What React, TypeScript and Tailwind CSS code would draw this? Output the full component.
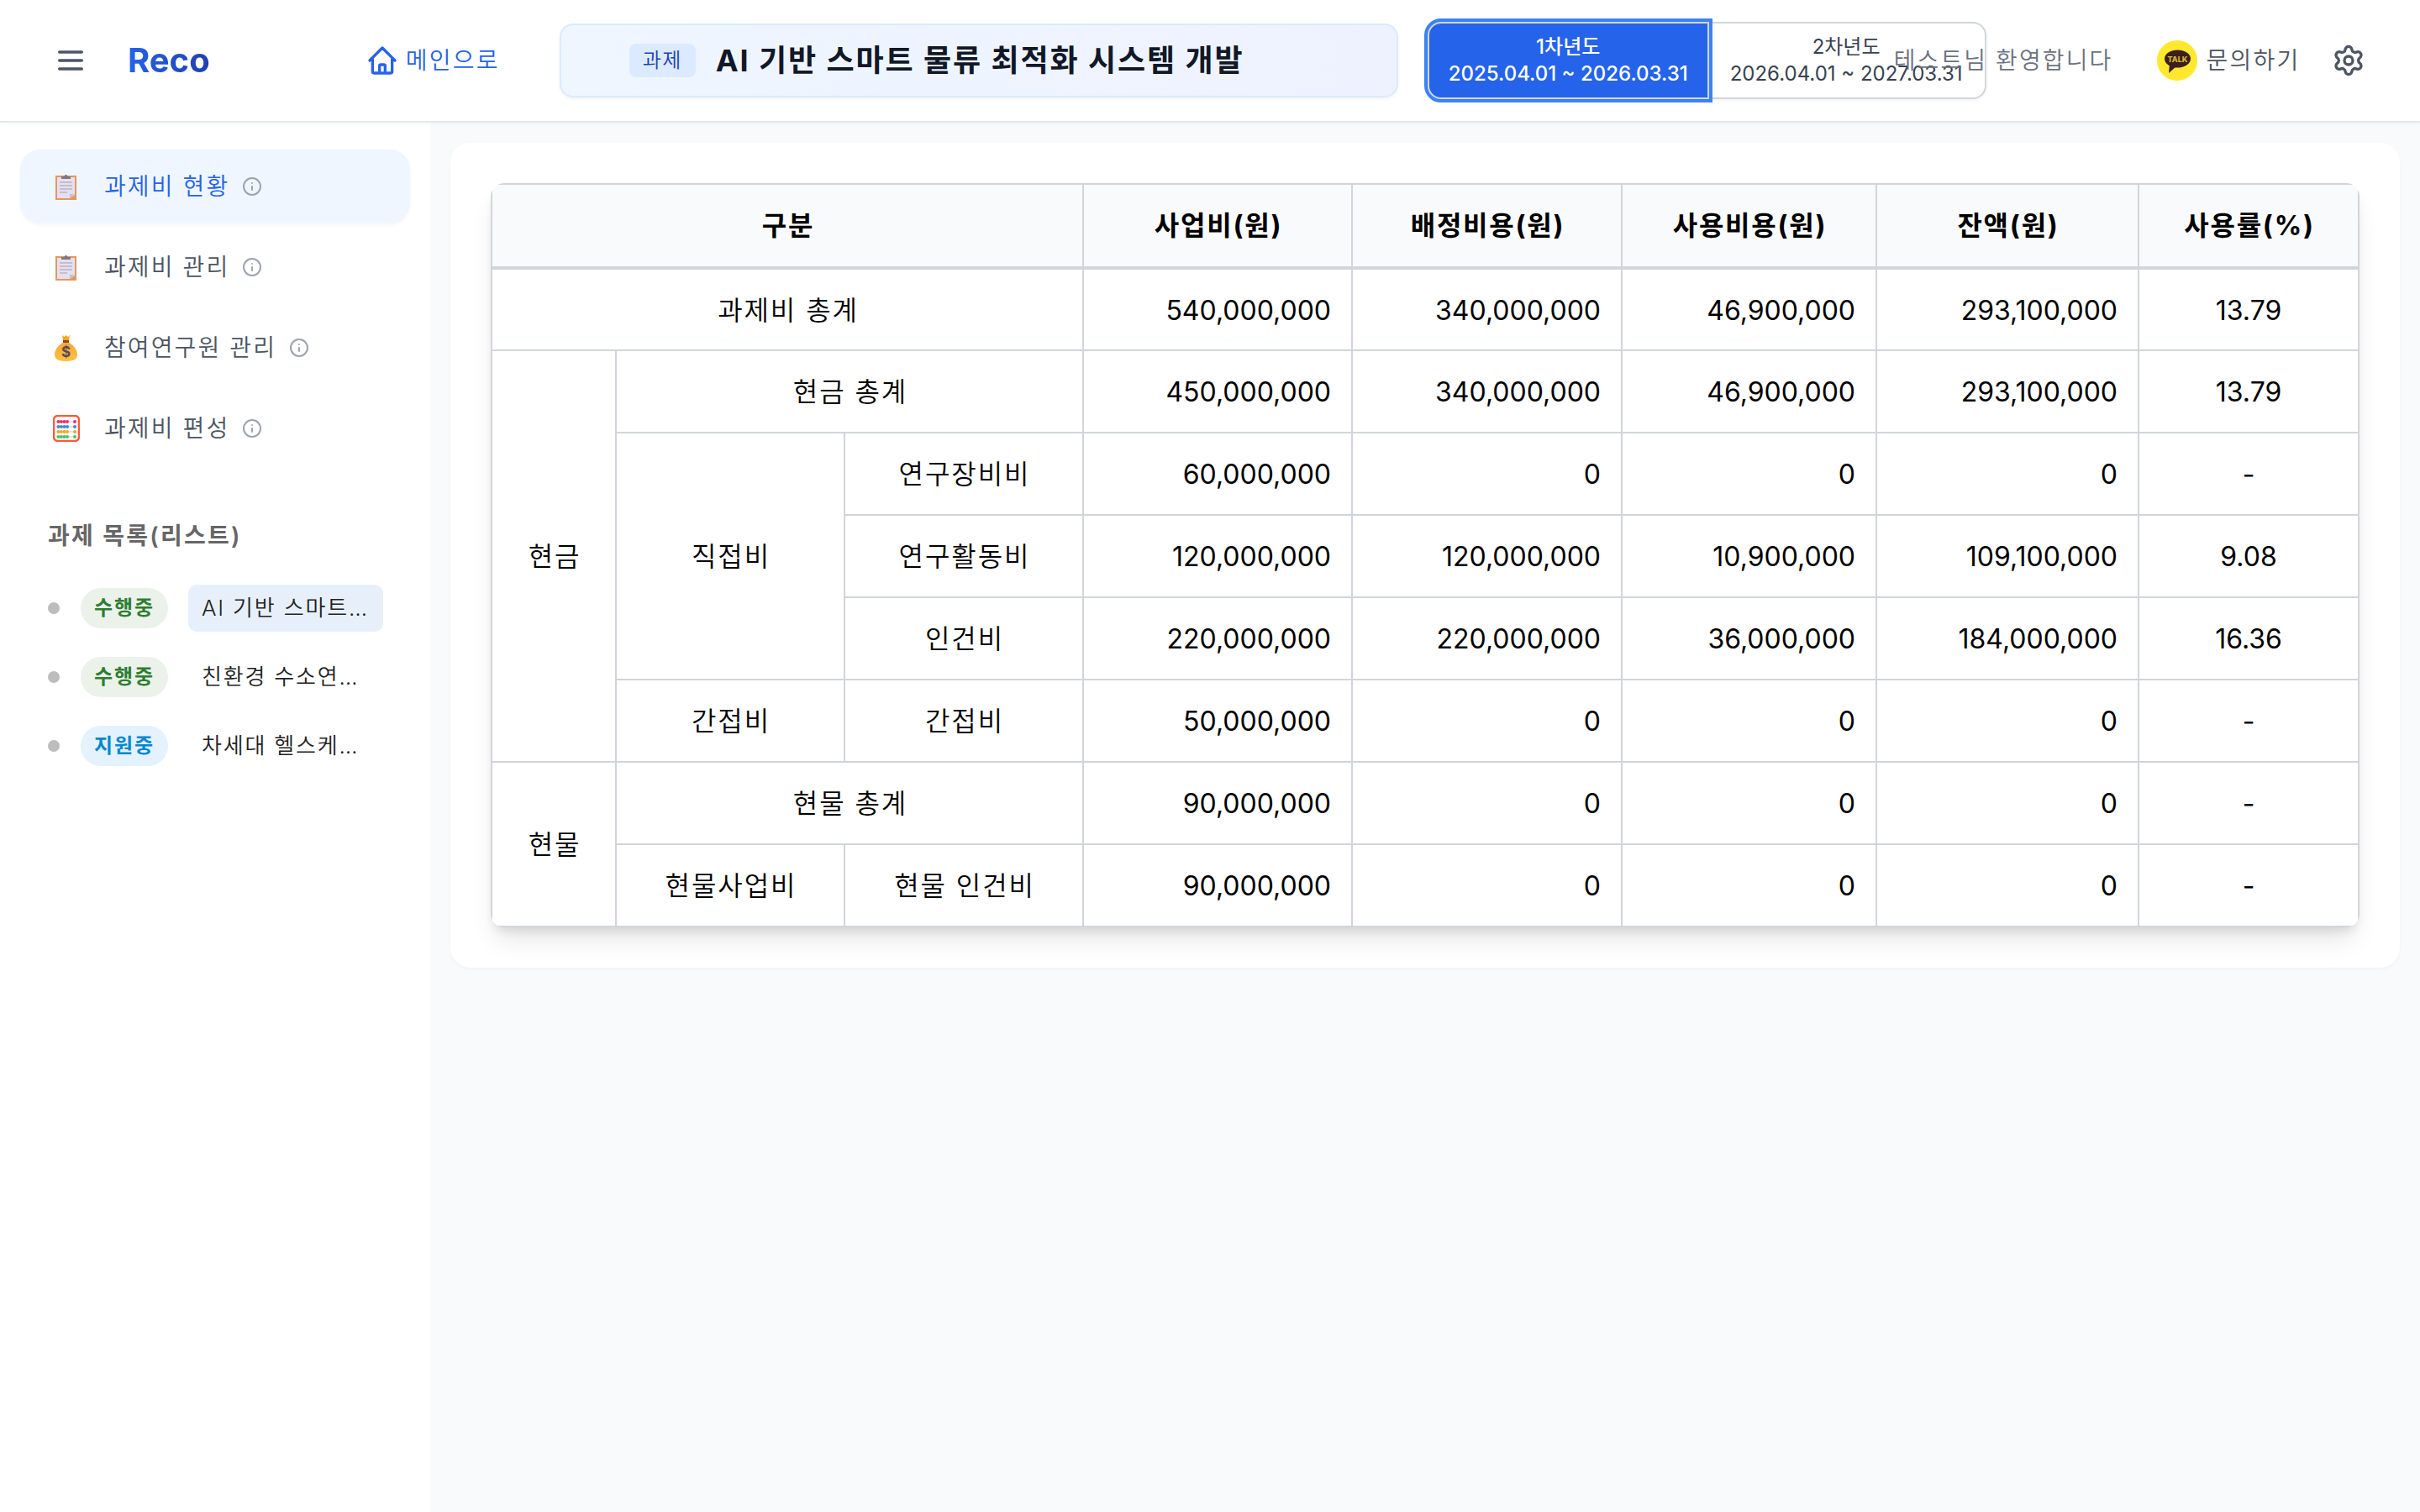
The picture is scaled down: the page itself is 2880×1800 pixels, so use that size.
import React from 'react';
import { Info, Settings } from 'lucide-react';

const FONT = "font-['Inter','Noto_Sans_CJK_KR',sans-serif]";

const ClipboardIcon = () => (
  <svg width="25" height="31" viewBox="0 0 25 31">
    <rect x="0" y="2" width="25" height="29" fill="#e0995f" />
    <path d="M2 4h21v21l-6 4H2z" fill="#e6dff0" />
    <path d="M17 29l6-5h-6z" fill="#c9bfd2" />
    <path d="M7 6V3h3.5a2 2 0 0 1 4 0H18v3z" fill="#7f7686" />
    <path d="M5 10h15M5 14h15M5 18h15M5 22h9" stroke="#a79bb0" strokeWidth="1" />
  </svg>
);

const MoneyBagIcon = () => (
  <svg width="27" height="31" viewBox="0 0 27 31">
    <defs>
      <linearGradient id="bag" x1="0" y1="0" x2="0" y2="1">
        <stop offset="0" stopColor="#f6a83a" />
        <stop offset="1" stopColor="#f9c13f" />
      </linearGradient>
    </defs>
    <path d="M9 0l2.5 2L13.500 0 16 2 18 0l-1 6.500h-7z" fill="#f5a524" />
    <rect x="10" y="6" width="7" height="3" fill="#8a4b1c" />
    <path d="M10 9h7c5 2.500 10 8 10 14 0 6-5 8-13.500 8S0 29 0 23C0 17 5 11.500 10 9z" fill="url(#bag)" />
    <text x="13.500" y="26" textAnchor="middle" fontSize="17" fontWeight="700" fill="#5b4a55" fontFamily="Inter">$</text>
  </svg>
);

const AbacusIcon = () => {
  const rows = [
    { y: 8, color: '#e8336f' },
    { y: 14, color: '#3f8ad8' },
    { y: 20, color: '#f5a623' },
    { y: 26, color: '#4bc46a' },
  ];
  return (
    <svg width="32" height="32" viewBox="0 0 32 32">
      <rect x="1" y="1" width="30" height="30" rx="5" fill="#fff" stroke="#fb5a3c" strokeWidth="2.500" />
      {rows.map((r) => (
        <g key={r.y}>
          <path d={`M4 ${r.y}h24`} stroke="#c9c3cc" strokeWidth="1" />
          {[6.500, 10, 13.500, 17, 26].map((x) => (
            <circle key={x} cx={x} cy={r.y} r="2" fill={r.color} />
          ))}
        </g>
      ))}
    </svg>
  );
};

const KakaoIcon = () => (
  <svg width="48" height="48" viewBox="0 0 48 48">
    <circle cx="24" cy="24" r="24" fill="#ffe82e" />
    <ellipse cx="24.500" cy="22" rx="15.500" ry="10.500" fill="#3c1e1e" />
    <path d="M15 28l-1 11 9-8z" fill="#3c1e1e" />
    <text x="24.500" y="25.500" textAnchor="middle" fontSize="9" fontWeight="800" fill="#d8b92e" fontFamily="Inter">TALK</text>
  </svg>
);

const navItems = [
  { label: '과제비 현황', icon: <ClipboardIcon />, active: true },
  { label: '과제비 관리', icon: <ClipboardIcon />, active: false },
  { label: '참여연구원 관리', icon: <MoneyBagIcon />, active: false },
  { label: '과제비 편성', icon: <AbacusIcon />, active: false },
];

const projects = [
  { status: '수행중', tone: 'green', title: 'AI 기반 스마트 물류 최적화 시스템 개발', selected: true },
  { status: '수행중', tone: 'green', title: '친환경 수소연료전지 핵심 기술 개발', selected: false },
  { status: '지원중', tone: 'blue', title: '차세대 헬스케어 데이터 플랫폼 구축', selected: false },
];

const Sidebar = () => (
  <aside className="w-[512px] shrink-0 bg-white pt-[32px] px-[24px]">
    <nav className="flex flex-col gap-[8px]">
      {navItems.map((item) => (
        <div
          key={item.label}
          className={`flex items-center h-[88px] pl-[38px] rounded-[24px] text-[28px] ${
            item.active ? 'bg-[#eff6ff] text-[#2563eb] shadow-[0_2px_4px_rgba(0,0,0,0.04)]' : 'text-[#4b5563]'
          }`}
        >
          <span className="w-[33px] flex justify-center">{item.icon}</span>
          <span className="ml-[29px] tracking-[0.075em] font-[350]">{item.label}</span>
          <Info size={24} className="ml-[15px] text-[#9ca3af]" />
        </div>
      ))}
    </nav>
    <h2 className="mt-[63px] ml-[33px] text-[28px] leading-[42px] font-semibold text-[#666666] tracking-[0.08em]">
      과제 목록(리스트)
    </h2>
    <ul className="mt-[37px] ml-[33px] flex flex-col gap-[26px]">
      {projects.map((p) => (
        <li key={p.title} className="flex items-center h-[56px]">
          <span className="w-[14px] h-[14px] rounded-full bg-[#bdbdbd]" />
          <span
            className={`ml-[25px] w-[104px] h-[48px] rounded-full flex items-center justify-center text-[24px] font-bold tracking-[0.08em] ${
              p.tone === 'green' ? 'bg-[#ebf2ea] text-[#2e7d32]' : 'bg-[#e3f2fd] text-[#0288d1]'
            }`}
          >
            {p.status}
          </span>
          <span
            className={`ml-[24px] w-[232px] h-[56px] pl-[16px] pr-[16px] rounded-[10px] leading-[56px] text-[26px] font-[350] text-[#222222] truncate tracking-[0.07em] ${
              p.selected ? 'bg-[#e7f0fa]' : ''
            }`}
          >
            {p.title}
          </span>
        </li>
      ))}
    </ul>
  </aside>
);

const Header = () => (
  <header className="relative z-10 h-[146px] shrink-0 flex items-center pl-[64px] bg-white border-b-2 border-[#e5e7eb] shadow-[0_2px_4px_rgba(0,0,0,0.03)]">
    <svg width="40" height="40" viewBox="0 0 24 24" fill="none" stroke="#4b5563" strokeWidth="2" strokeLinecap="round">
      <path d="M4 6h16M4 12h16M4 18h16" />
    </svg>
    <span className="ml-[48px] text-[40px] font-bold text-transparent bg-clip-text bg-gradient-to-r from-[#2563eb] to-[#1e40af]">Reco</span>
    <div className="ml-[185px] flex items-center text-[#2563eb]">
      <svg width="40" height="40" viewBox="0 0 24 24" fill="none" stroke="currentColor" strokeWidth="2" strokeLinecap="round" strokeLinejoin="round">
        <path d="M3 12l2-2m0 0l7-7 7 7M5 10v10a1 1 0 001 1h3m10-11l2 2m-2-2v10a1 1 0 01-1 1h-3m-6 0a1 1 0 001-1v-4a1 1 0 011-1h2a1 1 0 011 1v4a1 1 0 001 1m-6 0h6" />
      </svg>
      <span className="ml-[8px] text-[28px] tracking-[0.08em] font-[350]">메인으로</span>
    </div>
    <div className="ml-[71px] w-[998px] h-[88px] shrink-0 flex items-center pl-[81px] rounded-[16px] border-2 border-[#dbeafe] bg-gradient-to-r from-[#eff6ff] to-[#eef2ff] shadow-[0_2px_4px_rgba(0,0,0,0.05)]">
      <span className="w-[79px] h-[40px] rounded-[8px] bg-[#dbeafe] text-[#1e40af] text-[24px] font-[350] flex items-center justify-center tracking-[0.06em]">과제</span>
      <span className="ml-[24px] text-[36px] font-bold text-[#111827] tracking-[0.053em]">AI 기반 스마트 물류 최적화 시스템 개발</span>
    </div>
    <div className="ml-[35px] w-[555px] shrink-0 flex">
      <button className="relative z-10 shrink-0 h-[92px] px-[23px] rounded-l-[16px] border-2 border-[#d1d5db] outline-[4px] outline-[#3b82f6] bg-[#2563eb] text-white text-[24px] leading-[32px] font-medium">
        <div>1차년도</div>
        <div>2025.04.01 ~ 2026.03.31</div>
      </button>
      <button className="shrink-0 h-[92px] pl-[25px] pr-[26px] rounded-r-[16px] border-2 border-l-0 border-[#d1d5db] bg-white text-[#374151] text-[24px] leading-[32px] shadow-[0_2px_4px_rgba(0,0,0,0.05)]">
        <div>2차년도</div>
        <div>2026.04.01 ~ 2027.03.31</div>
      </button>
    </div>
    <span className="shrink-0 text-[28px] text-[#6b7280] tracking-[0.075em] font-[350]">테스트님 환영합니다</span>
    <div className="ml-[53px] flex items-center shrink-0">
      <KakaoIcon />
      <span className="ml-[10px] text-[28px] text-[#4b5563] tracking-[0.08em] font-[350]">문의하기</span>
    </div>
    <Settings size={40} className="ml-[38px] text-[#4b5563]" />
  </header>
);

const th = 'h-[100px] pl-[26px] pr-[24px] bg-[#f9fafb] border-2 border-b-4 border-[#d1d5db] text-[32px] font-bold text-center text-black tracking-[0.055em]';
const label = 'h-[98px] pl-[26px] pr-[24px] pt-[2px] border-2 border-[#d1d5db] text-[32px] font-[350] text-center text-black tracking-[0.06em]';
const num = 'h-[98px] px-[24px] pt-[2px] border-2 border-[#d1d5db] text-[32px] text-right text-black';
const rate = 'h-[98px] px-[24px] pt-[2px] border-2 border-[#d1d5db] text-[32px] text-center text-black';

const Nums = ({ v }: { v: string[] }) => (
  <>
    <td className={num}>{v[0]}</td>
    <td className={num}>{v[1]}</td>
    <td className={num}>{v[2]}</td>
    <td className={num}>{v[3]}</td>
    <td className={rate}>{v[4]}</td>
  </>
);

const BudgetTable = () => (
  <div className="rounded-[16px] overflow-hidden shadow-[0_20px_30px_-6px_rgba(0,0,0,0.1),0_8px_12px_-4px_rgba(0,0,0,0.1)]">
    <table className="w-[2222px] table-fixed border-collapse">
      <colgroup>
        <col className="w-[148px]" />
        <col className="w-[272px]" />
        <col className="w-[284px]" />
        <col className="w-[320px]" />
        <col className="w-[321px]" />
        <col className="w-[303px]" />
        <col className="w-[312px]" />
        <col className="w-[262px]" />
      </colgroup>
      <thead>
        <tr>
          <th colSpan={3} className={th}>구분</th>
          <th className={th}>사업비(원)</th>
          <th className={th}>배정비용(원)</th>
          <th className={th}>사용비용(원)</th>
          <th className={th}>잔액(원)</th>
          <th className={th}>사용률(%)</th>
        </tr>
      </thead>
      <tbody>
        <tr>
          <td colSpan={3} className={label}>과제비 총계</td>
          <Nums v={['540,000,000', '340,000,000', '46,900,000', '293,100,000', '13.79']} />
        </tr>
        <tr>
          <td rowSpan={5} className={label}>현금</td>
          <td colSpan={2} className={label}>현금 총계</td>
          <Nums v={['450,000,000', '340,000,000', '46,900,000', '293,100,000', '13.79']} />
        </tr>
        <tr>
          <td rowSpan={3} className={label}>직접비</td>
          <td className={label}>연구장비비</td>
          <Nums v={['60,000,000', '0', '0', '0', '-']} />
        </tr>
        <tr>
          <td className={label}>연구활동비</td>
          <Nums v={['120,000,000', '120,000,000', '10,900,000', '109,100,000', '9.08']} />
        </tr>
        <tr>
          <td className={label}>인건비</td>
          <Nums v={['220,000,000', '220,000,000', '36,000,000', '184,000,000', '16.36']} />
        </tr>
        <tr>
          <td className={label}>간접비</td>
          <td className={label}>간접비</td>
          <Nums v={['50,000,000', '0', '0', '0', '-']} />
        </tr>
        <tr>
          <td rowSpan={2} className={label}>현물</td>
          <td colSpan={2} className={label}>현물 총계</td>
          <Nums v={['90,000,000', '0', '0', '0', '-']} />
        </tr>
        <tr>
          <td className={label}>현물사업비</td>
          <td className={label}>현물 인건비</td>
          <Nums v={['90,000,000', '0', '0', '0', '-']} />
        </tr>
      </tbody>
    </table>
  </div>
);

export default function App() {
  return (
    <div className={`${FONT} w-[2880px] h-[1800px] flex flex-col bg-[#f9fafb] overflow-hidden`}>
      <Header />
      <div className="flex flex-1 min-h-0">
        <Sidebar />
        <main className="flex-1 min-w-0 pt-[24px] pl-[24px] pr-[24px]">
          <div className="w-[2320px] p-[48px] bg-white rounded-[24px] shadow-[0_2px_4px_rgba(0,0,0,0.03)]">
            <BudgetTable />
          </div>
        </main>
      </div>
    </div>
  );
}
